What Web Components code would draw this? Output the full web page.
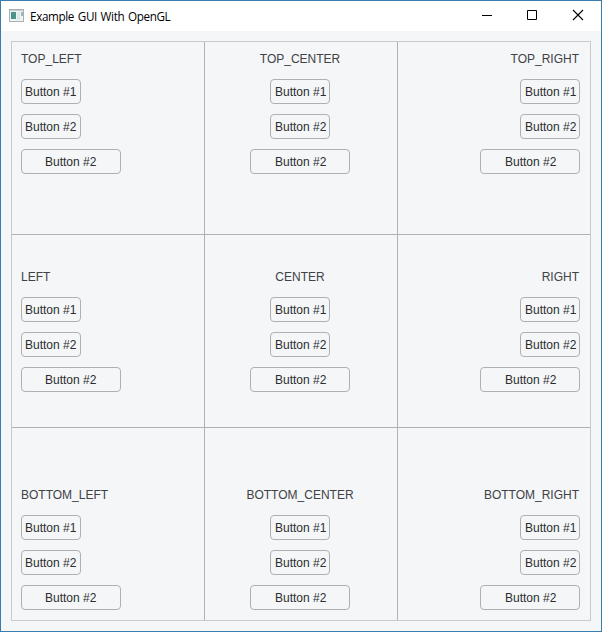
<!DOCTYPE html>
<html lang="en">
<head>
<meta charset="utf-8">
<title>Example GUI With OpenGL</title>
<style>
html,body{margin:0;height:100%}
body{font-family:"Liberation Sans",Arial,sans-serif;overflow:hidden}
</style>
</head>
<body>
<app-window caption="Example GUI With OpenGL"><anchor-grid></anchor-grid></app-window>
<script>
class AppWindow extends HTMLElement {
  connectedCallback() {
    const root = this.attachShadow({mode: "open"});
    root.innerHTML = `<style>
:host{display:flex;flex-direction:column;box-sizing:border-box;width:602px;height:632px;border:1px solid #3a7cae;background:#f4f6f8}
header{display:flex;align-items:center;flex:none;height:30px;background:#fff;color:#000}
.icon{margin:0 6px 2px 8px;flex:none}
.caption{font:11.700px/16px "Open Sans","Noto Sans",sans-serif;letter-spacing:-.36px;word-spacing:1px;flex:1;white-space:nowrap}
.ctl{display:flex;flex:none}
.ctl svg{display:block}
main{flex:1;padding:10px;min-height:0}
</style>
<header>
<svg class="icon" width="15" height="13" viewBox="0 0 15 13"><rect x=".5" y=".5" width="14" height="12" fill="#eef3f3" stroke="#a9b1b3"/><rect x="1" y="1" width="13" height="1" fill="#c6cdd0"/><rect x="2" y="3" width="5" height="7" fill="#4d9488"/><rect x="8" y="3" width="3" height="8" fill="#dce7e9"/><rect x="12" y="3" width="2" height="4" fill="#9db5b3"/></svg>
<span class="caption"></span>
<span class="ctl">
<svg width="45" height="30" viewBox="0 0 45 30"><path d="M17 14.5h10" stroke="#000"/></svg>
<svg width="45" height="30" viewBox="0 0 45 30"><path d="M17.500 9.500h9v9h-9z" fill="none" stroke="#000"/></svg>
<svg width="46" height="30" viewBox="0 0 46 30"><path d="M18 9l10 10M28 9l-10 10" stroke="#000" stroke-width="1.100"/></svg>
</span>
</header><main><slot></slot></main>`;
    root.querySelector(".caption").textContent = this.getAttribute("caption");
  }
}
customElements.define("app-window", AppWindow);

class OutlineButton extends HTMLElement {
  connectedCallback() {
    this.attachShadow({mode: "open"}).innerHTML = `<style>
:host{display:block}
button{display:block;box-sizing:border-box;width:60px;height:25px;border:1px solid #aeb0b3;border-radius:4px;background:none;padding:1px 0 0 var(--inset,3px);font:12px/22px "Liberation Sans",Arial,sans-serif;color:#2c2d2f;text-align:left;white-space:nowrap}
:host([wide]) button{width:100px;padding-left:calc(var(--inset,3px) + 20px)}
</style><button><slot></slot></button>`;
  }
}
customElements.define("outline-button", OutlineButton);

class AnchorPanel extends HTMLElement {
  connectedCallback() {
    this.attachShadow({mode: "open"}).innerHTML = `<style>
:host{display:flex;flex-direction:column;gap:10px;box-sizing:border-box;padding:10px 9px 10px;justify-content:flex-start;align-items:flex-start;--inset:3px}
:host([v=middle]){justify-content:center;padding:19px 9px 20px}
:host([v=bottom]){justify-content:flex-end}
:host([h=center]){align-items:center;padding-right:11px;--inset:4px}
:host([h=right]){align-items:flex-end;padding-right:10px;--inset:4px}
.label{font-size:12px;line-height:15px;padding-bottom:2px;color:#404245;white-space:nowrap}
:host([h=right]) .label{padding-right:1px}
</style><div class="label"></div>
<outline-button>Button #1</outline-button><outline-button>Button #2</outline-button><outline-button wide>Button #2</outline-button>`;
    this.shadowRoot.querySelector(".label").textContent = this.getAttribute("label");
  }
}
customElements.define("anchor-panel", AnchorPanel);

class AnchorGrid extends HTMLElement {
  connectedCallback() {
    const h = ["left", "center", "right"];
    const rows = {
      top: ["TOP_LEFT", "TOP_CENTER", "TOP_RIGHT"],
      middle: ["LEFT", "CENTER", "RIGHT"],
      bottom: ["BOTTOM_LEFT", "BOTTOM_CENTER", "BOTTOM_RIGHT"]
    };
    const cells = Object.entries(rows).map(([v, names]) =>
      names.map((n, i) => `<anchor-panel v="${v}" h="${h[i]}" label="${n}"></anchor-panel>`).join("")).join("");
    this.attachShadow({mode: "open"}).innerHTML = `<style>
:host{display:grid;grid-template:repeat(3,192px)/repeat(3,192px);gap:1px;width:578px;border:1px solid #c8cacc;background:#b0b2b4}
anchor-panel{background:#f4f6f8}
</style>${cells}`;
  }
}
customElements.define("anchor-grid", AnchorGrid);
</script>
</body>
</html>
